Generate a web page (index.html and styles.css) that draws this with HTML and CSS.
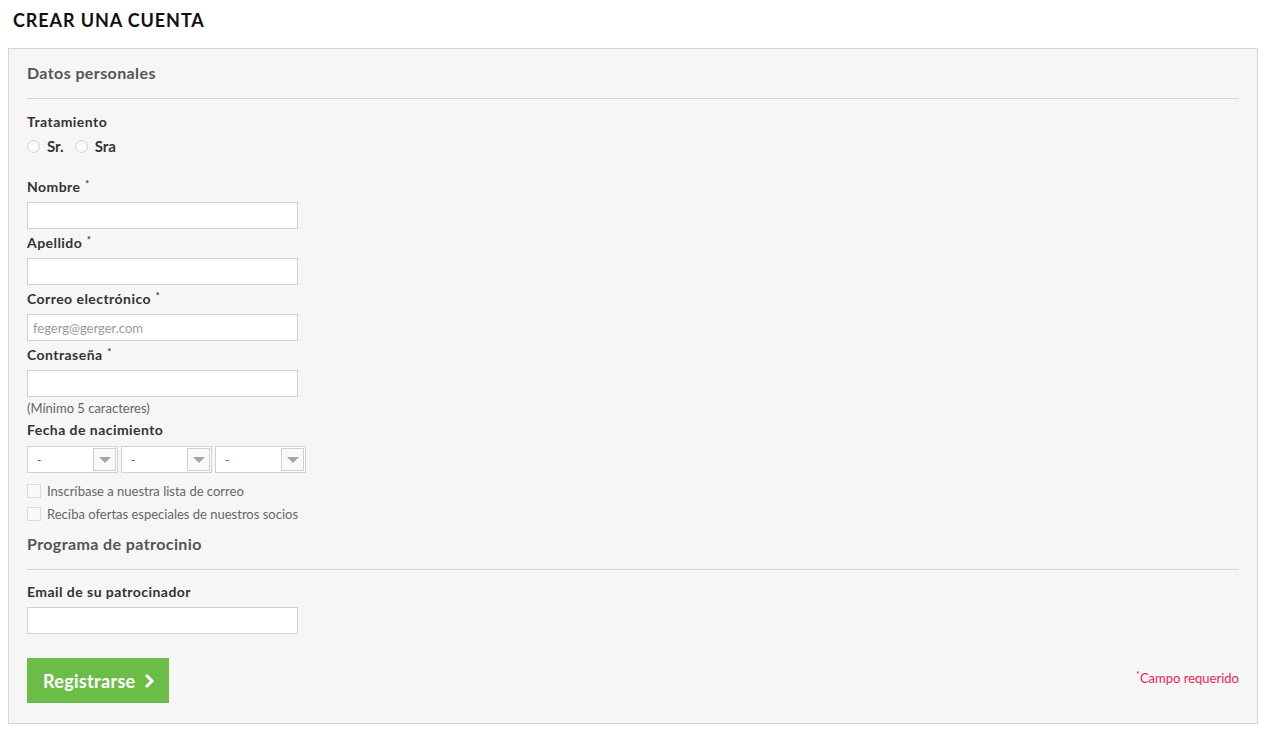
FILE: index.html
```html
<!DOCTYPE html>
<html lang="es">
<head>
	<meta charset="UTF-8">
	<title>Crear una cuenta</title>
	<link rel="stylesheet" href="styles.css">
</head>
<body>
	<h1 class="page-title">Crear una cuenta</h1>
	<form class="account-box">
		<h2 class="box-heading">Datos personales</h2>

		<div class="field first">
			<span class="field-label">Tratamiento</span>
			<div class="radio-row">
				<label class="radio"><input type="radio" name="gender"><span>Sr.</span></label>
				<label class="radio"><input type="radio" name="gender"><span>Sra</span></label>
			</div>
		</div>

		<div class="field gap-top">
			<label class="field-label">Nombre <sup>*</sup></label>
			<input class="text-input" type="text">
		</div>
		<div class="field">
			<label class="field-label">Apellido <sup>*</sup></label>
			<input class="text-input" type="text">
		</div>
		<div class="field">
			<label class="field-label">Correo electrónico <sup>*</sup></label>
			<input class="text-input" type="email" placeholder="fegerg@gerger.com">
		</div>
		<div class="field">
			<label class="field-label">Contraseña <sup>*</sup></label>
			<input class="text-input" type="password">
			<p class="hint">(Mínimo 5 caracteres)</p>
		</div>
		<div class="field birth">
			<label class="field-label">Fecha de nacimiento</label>
			<div class="select-row">
				<div class="select-box"><select><option>-</option></select><span class="select-btn"></span></div>
				<div class="select-box"><select><option>-</option></select><span class="select-btn"></span></div>
				<div class="select-box"><select><option>-</option></select><span class="select-btn"></span></div>
			</div>
		</div>

		<div class="checks">
			<label class="check"><input type="checkbox"><span>Inscríbase a nuestra lista de correo</span></label>
			<label class="check"><input type="checkbox"><span>Recíba ofertas especiales de nuestros socios</span></label>
		</div>

		<h2 class="box-heading second">Programa de patrocinio</h2>
		<div class="field sponsor">
			<label class="field-label">Email de su patrocinador</label>
			<input class="text-input" type="email">
		</div>

		<div class="form-footer">
			<button class="submit-btn" type="button">Registrarse
				<svg width="11" height="16" viewBox="0 0 11 16"><path d="M2 2l6 6-6 6" fill="none" stroke="#fff" stroke-width="3"/></svg>
			</button>
			<p class="required-note"><sup>*</sup>Campo requerido</p>
		</div>
	</form>
</body>
</html>
```

FILE: styles.css
```css
*{margin:0;padding:0;box-sizing:border-box;}
body{font-family:Lato,"Open Sans",sans-serif;color:#333;background:#fff;}
.page-title{font-size:18px;line-height:24px;font-weight:700;letter-spacing:0.9px;text-transform:uppercase;color:#111;padding:8px 13px 0;}
.account-box{margin:16px 0 0 8px;width:1250px;border:1px solid #d5d5d5;background:#f6f6f6;padding:14px 18px 20px;}
.box-heading{font-size:16px;line-height:20px;font-weight:700;letter-spacing:0.4px;color:#555;padding-bottom:15px;border-bottom:1px solid #d6d6d6;}
.box-heading.second{margin-top:9px;}

.field{margin-bottom:5px;}
.field.first{margin-top:14px;margin-bottom:0;}
.field.gap-top{margin-top:23px;}
.field-label{display:block;font-size:14px;line-height:18px;font-weight:700;letter-spacing:0.45px;color:#333;margin-bottom:6px;}
.field-label sup{font-size:9px;vertical-align:5px;line-height:0;margin-left:1px;}
.field.first .field-label{margin-bottom:0;}

.radio-row{display:flex;margin-top:6px;line-height:18px;}
.radio{display:flex;align-items:center;font-size:15px;font-weight:700;color:#333;margin-right:11px;}
.radio input{appearance:none;width:13px;height:13px;border:1px solid #d3d3d3;border-radius:50%;background:#fbfbfb;margin-right:7px;}

.text-input{display:block;width:271px;height:27px;border:1px solid #d2d2d2;background:#fff;padding:0 5px;font-family:inherit;font-size:13px;color:#555;outline:none;}
.text-input::placeholder{color:#9a9a9a;}

.hint{font-size:13px;line-height:16px;color:#666;margin-top:3px;}
.field.birth{margin-top:5px;margin-bottom:0;}
.field.birth .field-label{margin-bottom:7px;}

.select-row{display:flex;gap:3px;}
.select-box{position:relative;width:91px;height:27px;border:1px solid #d2d2d2;background:#fff;}
.select-box select{appearance:none;width:100%;height:100%;border:0;background:transparent;font-family:inherit;font-size:12px;color:#555;padding-left:9px;outline:none;}
.select-btn{position:absolute;right:0;top:0;width:23px;height:23px;margin:1px;border:1px solid #d0d0d0;background:#f9f9f9;pointer-events:none;}
.select-btn::after{content:"";position:absolute;left:5px;top:8px;border-left:6px solid transparent;border-right:6px solid transparent;border-top:6px solid #a6a6a6;}

.checks{margin-top:6px;}
.check{display:flex;align-items:center;height:23px;font-size:13px;color:#666;}
.check input{appearance:none;width:14px;height:14px;border:1px solid #dcdcdc;background:#f9f9f9;margin-right:6px;}

.field.sponsor{margin-top:13px;margin-bottom:0;}

.form-footer{display:flex;justify-content:space-between;align-items:center;margin-top:24px;}
.submit-btn{display:flex;align-items:center;gap:8px;height:45px;padding:0 14px 0 16px;border:0;background:#6bbd48;color:#fff;font-family:inherit;font-size:18px;font-weight:700;letter-spacing:0.3px;cursor:pointer;}
.required-note{font-size:13px;color:#ee1d52;margin-top:-6px;}
.required-note sup{font-size:9px;vertical-align:5px;line-height:0;}
```
